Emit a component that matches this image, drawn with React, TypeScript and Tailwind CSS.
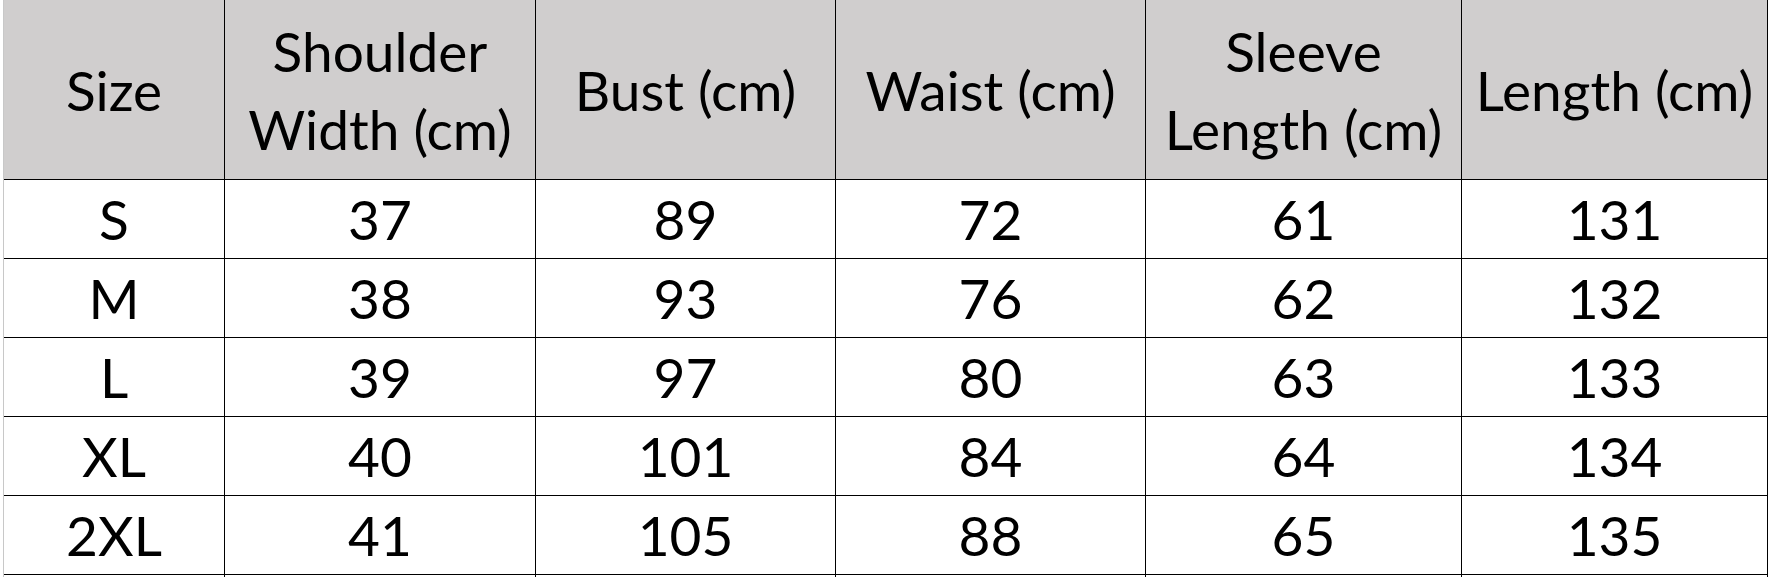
const headers: string[][] = [
  ["Size"],
  ["Shoulder", "Width (cm)"],
  ["Bust (cm)"],
  ["Waist (cm)"],
  ["Sleeve", "Length (cm)"],
  ["Length (cm)"],
];

const rows: (string | number)[][] = [
  ["S", 37, 89, 72, 61, 131],
  ["M", 38, 93, 76, 62, 132],
  ["L", 39, 97, 80, 63, 133],
  ["XL", 40, 101, 84, 64, 134],
  ["2XL", 41, 105, 88, 65, 135],
];

const cellBase =
  "flex items-center justify-center border-r border-b border-black text-center";

export default function App() {
  return (
    <div className="flex h-[577px] w-[1769px] overflow-hidden bg-white font-['Lato',sans-serif] text-[55px] text-black">
      <div className="w-[4px] shrink-0 border-r border-[#c8c8c8]" />
      <div className="grid grid-cols-[221px_311px_300px_310px_316px_306px] grid-rows-[180px_repeat(5,79px)_2px]">
        {headers.map((lines, i) => (
          <div key={i} className={`${cellBase} bg-[#d0cece]`}>
            <div className="leading-[78px]">
              {lines.map((line) => (
                <div key={line} className="whitespace-nowrap">
                  {line}
                </div>
              ))}
            </div>
          </div>
        ))}
        {rows.map((row) =>
          row.map((value, i) => (
            <div key={`${row[0]}-${i}`} className={cellBase}>
              <span className="leading-none">{value}</span>
            </div>
          ))
        )}
        {headers.map((_, i) => (
          <div key={`tail-${i}`} className="border-r border-black" />
        ))}
      </div>
    </div>
  );
}
